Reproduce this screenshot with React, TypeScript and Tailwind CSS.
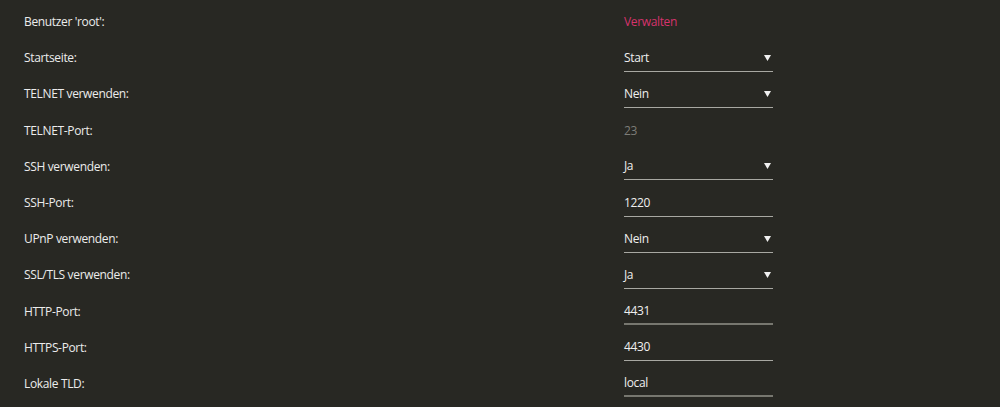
type Row = {
  label: string;
  kind: "link" | "select" | "input" | "disabled";
  value: string;
  strong?: boolean;
};

const rows: Row[] = [
  { label: "Benutzer 'root':", kind: "link", value: "Verwalten" },
  { label: "Startseite:", kind: "select", value: "Start" },
  { label: "TELNET verwenden:", kind: "select", value: "Nein" },
  { label: "TELNET-Port:", kind: "disabled", value: "23" },
  { label: "SSH verwenden:", kind: "select", value: "Ja" },
  { label: "SSH-Port:", kind: "input", value: "1220" },
  { label: "UPnP verwenden:", kind: "select", value: "Nein" },
  { label: "SSL/TLS verwenden:", kind: "select", value: "Ja" },
  { label: "HTTP-Port:", kind: "input", value: "4431", strong: true },
  { label: "HTTPS-Port:", kind: "input", value: "4430" },
  { label: "Lokale TLD:", kind: "input", value: "local", strong: true },
];

function Caret() {
  return (
    <svg width="7" height="6" viewBox="0 0 7 6" className="shrink-0">
      <path d="M0 0 H7 L3.5 6 Z" fill="#f0f0f0" />
    </svg>
  );
}

function Value({ row }: { row: Row }) {
  if (row.kind === "link") {
    return <span className="text-[#d6336c]">{row.value}</span>;
  }
  if (row.kind === "disabled") {
    return <span className="text-[#7d7d78]">{row.value}</span>;
  }
  return (
    <div
      className={
        "flex h-[27px] w-[149px] items-center justify-between pr-[2px] " +
        (row.strong
          ? "border-b-2 border-[#77776f]"
          : "border-b border-[#a8a8a2]")
      }
    >
      <span className="text-[#efefef]">{row.value}</span>
      {row.kind === "select" && <Caret />}
    </div>
  );
}

export default function App() {
  return (
    <div
      className="min-h-[407px] w-full bg-[#282823] pt-[4px] text-[12px] tracking-[-0.35px] text-[#ececec]"
      style={{ fontFamily: '"Open Sans", "DejaVu Sans", sans-serif' }}
    >
      {rows.map((row) => (
        <div key={row.label} className="flex h-[36.2px] items-center">
          <div className="w-[624px] pl-[24px]">{row.label}</div>
          <div className="flex items-center">
            <Value row={row} />
          </div>
        </div>
      ))}
    </div>
  );
}
